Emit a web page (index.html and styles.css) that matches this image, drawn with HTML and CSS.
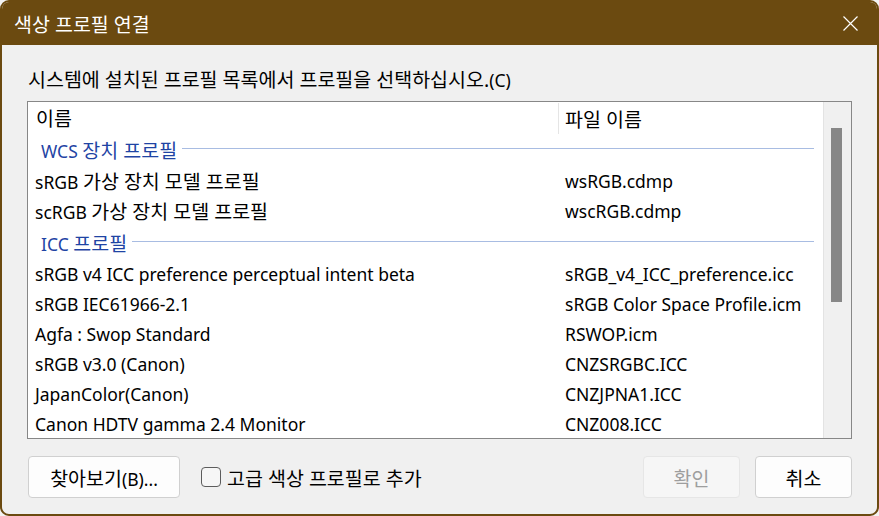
FILE: index.html
```html
<!DOCTYPE html>
<html lang="ko">
<head>
  <meta charset="UTF-8" />
  <title>색상 프로필 연결</title>
  <link rel="stylesheet" href="styles.css">
</head>
<body>
  <div class="window">
    <div class="titlebar">
      <span class="title ko">색상 프로필 연결</span>
      <button class="close" aria-label="닫기">
        <svg width="15" height="15" viewBox="0 0 15 15">
          <path d="M0.5 0.5 L14.5 14.5 M14.5 0.5 L0.5 14.5" stroke="#fff" stroke-width="1.2" fill="none"/>
        </svg>
      </button>
    </div>

    <div class="content">
      <div class="label"><span class="ko">시스템에 설치된 프로필 목록에서 프로필을 선택하십시오.</span>(C)</div>

      <div class="listbox">
        <div class="list-main">
          <div class="list-header">
            <div class="col-name ko">이름</div>
            <div class="col-file ko">파일 이름</div>
          </div>

          <div class="group"><span>WCS <span class="ko">장치 프로필</span></span><i></i></div>
          <div class="row"><div class="col-name">sRGB <span class="ko">가상 장치 모델 프로필</span></div><div class="col-file">wsRGB.cdmp</div></div>
          <div class="row"><div class="col-name">scRGB <span class="ko">가상 장치 모델 프로필</span></div><div class="col-file">wscRGB.cdmp</div></div>

          <div class="group tall"><span>ICC <span class="ko">프로필</span></span><i></i></div>
          <div class="row"><div class="col-name">sRGB v4 ICC preference perceptual intent beta</div><div class="col-file">sRGB_v4_ICC_preference.icc</div></div>
          <div class="row"><div class="col-name">sRGB IEC61966-2.1</div><div class="col-file">sRGB Color Space Profile.icm</div></div>
          <div class="row"><div class="col-name">Agfa : Swop Standard</div><div class="col-file">RSWOP.icm</div></div>
          <div class="row"><div class="col-name">sRGB v3.0 (Canon)</div><div class="col-file">CNZSRGBC.ICC</div></div>
          <div class="row"><div class="col-name">JapanColor(Canon)</div><div class="col-file">CNZJPNA1.ICC</div></div>
          <div class="row"><div class="col-name">Canon HDTV gamma 2.4 Monitor</div><div class="col-file">CNZ008.ICC</div></div>
        </div>
        <div class="scrollbar">
          <div class="thumb"></div>
        </div>
      </div>

      <div class="footer">
        <button class="btn browse"><span class="ko">찾아보기</span>(B)...</button>
        <label class="check">
          <span class="box"></span>
          <span class="ko">고급 색상 프로필로 추가</span>
        </label>
        <div class="spacer"></div>
        <button class="btn ok ko" disabled>확인</button>
        <button class="btn ko">취소</button>
      </div>
    </div>
  </div>
</body>
</html>
```

FILE: styles.css
```css
* {
  margin: 0;
  padding: 0;
  box-sizing: border-box;
}

body {
  font-family: "Noto Sans", "Noto Sans CJK KR", sans-serif;
  font-size: 17.5px;
  background-color: #f3f3f3;
  color: #000;
}

/* hangul runs a bit larger, like Malgun Gothic next to Segoe UI */
.ko {
  font-size: 19.5px;
}

.window {
  width: 879px;
  height: 516px;
  border: 2px solid #6b4a10;
  border-radius: 9px;
  background-color: #f0f0f0;
  overflow: hidden;
  display: flex;
  flex-direction: column;
}

.titlebar {
  height: 43px;
  background-color: #6b4a10;
  display: flex;
  align-items: center;
  padding-left: 12px;
  flex-shrink: 0;
}

.title {
  color: #fff;
  flex: 1;
  margin-top: -1px;
}

.close {
  width: 46px;
  height: 43px;
  border: none;
  background: none;
  display: flex;
  align-items: center;
  justify-content: center;
  margin-right: 4px;
}

.content {
  flex: 1;
  display: flex;
  flex-direction: column;
  padding: 22px 25px 0 25px;
}

.label {
  height: 25px;
  line-height: 25px;
  padding-left: 1px;
  margin-bottom: 9px;
  white-space: nowrap;
}

.listbox {
  height: 338px;
  border: 1px solid #878787;
  background-color: #fff;
  display: flex;
  overflow: hidden;
}

.list-main {
  flex: 1;
  border-right: 1px solid #e3e3e3;
  overflow: hidden;
}

.list-header {
  height: 32px;
  display: flex;
  align-items: center;
}

.list-header .col-name {
  width: 531px;
  padding-left: 8px;
  height: 31px;
  line-height: 31px;
  border-right: 1px solid #e5e5e5;
}

.list-header .col-file {
  padding-left: 6px;
}

.row {
  height: 30px;
  display: flex;
  align-items: center;
  white-space: nowrap;
  padding-bottom: 1px;
}

.row .col-name {
  width: 537px;
  padding-left: 7px;
}

.group {
  height: 32px;
  display: flex;
  align-items: center;
  padding: 0 9px 2px 13px;
  color: #1f44a4;
  white-space: nowrap;
}

.group.tall {
  height: 33px;
  padding-bottom: 1px;
}

.group i {
  flex: 1;
  height: 1px;
  background-color: #a8bce2;
  margin: 0 0 1px 5px;
}

.scrollbar {
  width: 27px;
  background-color: #f0f0f0;
  padding: 26px 0 0 7px;
}

.thumb {
  width: 11px;
  height: 174px;
  background-color: #878787;
}

.footer {
  display: flex;
  align-items: center;
  margin-top: 17px;
  padding-left: 1px;
}

.btn {
  font-family: inherit;
  font-size: 17.5px;
  height: 42px;
  width: 97px;
  border: 1px solid #d0d0d0;
  border-radius: 4px;
  background-color: #fdfdfd;
  color: #000;
}

.btn.ko {
  font-size: 19.5px;
}

.btn.browse {
  width: 152px;
}

.btn.ok {
  background-color: #f6f6f6;
  border-color: #e6e6e6;
  color: #9e9e9e;
  margin-right: 15px;
}

.check {
  display: flex;
  align-items: center;
  gap: 6px;
  margin-left: 21px;
}

.box {
  width: 20px;
  height: 20px;
  border: 1px solid #5c5c5c;
  border-radius: 4px;
  background-color: #f6f6f6;
}

.spacer {
  flex: 1;
}
```
